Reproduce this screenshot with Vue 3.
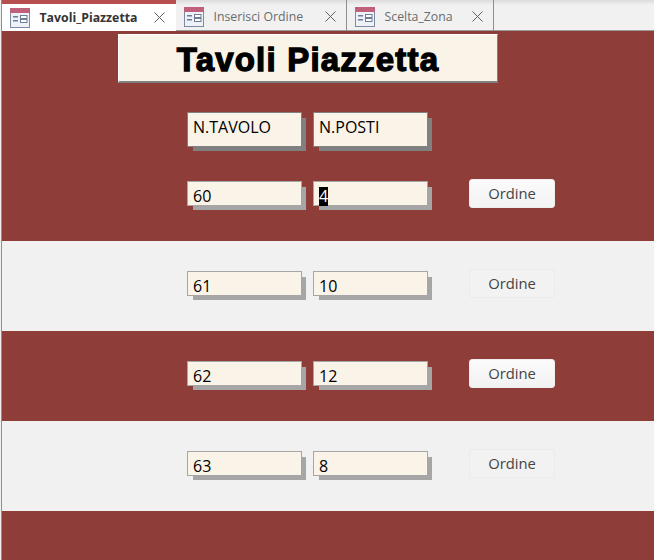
<script setup>
import { ref } from "vue";

const tabs = ref([
  { name: "Tavoli_Piazzetta", width: 174, active: true },
  { name: "Inserisci Ordine", width: 171, active: false },
  { name: "Scelta_Zona", width: 147, active: false },
]);

// primo tavolo sta nella sezione con le intestazioni
const rows = ref([
  { tavolo: "61", posti: "10", light: true },
  { tavolo: "62", posti: "12", light: false },
  { tavolo: "63", posti: "8", light: true },
]);
</script>

<template>
  <div class="window">
    <div class="tabbar">
      <div
        v-for="tab in tabs"
        :key="tab.name"
        class="tab"
        :class="{ active: tab.active }"
        :style="{ width: tab.width + 'px' }"
      >
        <svg class="tabicon" width="20" height="20" viewBox="0 0 20 20">
          <rect x="0.5" y="1.5" width="19" height="18" fill="#eef1f7" stroke="#7d8aa3" />
          <rect x="0" y="0" width="20" height="5" fill="#c0607a" />
          <rect x="3" y="8" width="5" height="1.5" fill="#6d7d99" />
          <rect x="3" y="12" width="5" height="1.5" fill="#6d7d99" />
          <rect x="10.5" y="7.5" width="6.5" height="3" fill="#fff" stroke="#6d7d99" stroke-width="1" />
          <rect x="10.5" y="11.5" width="6.5" height="3" fill="#fff" stroke="#6d7d99" stroke-width="1" />
        </svg>
        <span class="tabname">{{ tab.name }}</span>
        <svg class="tabclose" width="11" height="11" viewBox="0 0 11 11">
          <path d="M0.5 0.5 L10.5 10.5 M10.5 0.5 L0.5 10.5" stroke="#5f5f5f" stroke-width="1" fill="none" />
        </svg>
      </div>
    </div>

    <div class="form">
      <section class="band first">
        <div class="titlebox">Tavoli Piazzetta</div>
        <div class="line heads">
          <div class="field head">N.TAVOLO</div>
          <div class="field head">N.POSTI</div>
        </div>
        <div class="line datarow">
          <div class="field">60</div>
          <div class="field"><span class="selected">4</span></div>
          <button class="ordine">Ordine</button>
        </div>
      </section>

      <section v-for="row in rows" :key="row.tavolo" class="band" :class="{ light: row.light }">
        <div class="line datarow">
          <div class="field">{{ row.tavolo }}</div>
          <div class="field">{{ row.posti }}</div>
          <button class="ordine">Ordine</button>
        </div>
      </section>

      <section class="band last"></section>
    </div>
  </div>
</template>

<style>
html, body {
  margin: 0;
  background: #8f3d39;
}
</style>

<style scoped>
.window {
  width: 654px;
  height: 560px;
  box-sizing: border-box;
  padding-left: 2px;
  overflow: hidden;
  display: flex;
  flex-direction: column;
  background: linear-gradient(90deg, #f1f1f1 1px, #8b9096 1px) 0 0 / 2px 100% no-repeat;
  font-family: "Open Sans", "Noto Sans", sans-serif;
}
.tabbar {
  height: 31px;
  flex: none;
  display: flex;
  box-sizing: border-box;
  border-bottom: 1px solid #9a9a9a;
  background: linear-gradient(#dcdcdc 0, #f1f1f1 5px);
}
.tab {
  box-sizing: border-box;
  display: flex;
  align-items: center;
  height: 30px;
  padding: 3px 0 0 8px;
  border-right: 1px solid #8f8f8f;
  color: #6b6b6b;
  font-size: 12.3px;
}
.tab.active {
  height: 31px;
  background: #fff;
  border-top: 4px solid #b5504f;
  border-right: none;
  color: #333;
  font-weight: 700;
  padding-top: 0;
  padding-right: 1px;
}
.tabicon {
  flex: none;
}
.tabname {
  margin-left: 9.5px;
  flex: 1;
  white-space: nowrap;
}
.tabclose {
  flex: none;
  margin-right: 10px;
}
.form {
  flex: 1;
  display: flex;
  flex-direction: column;
}
.band {
  height: 90px;
  flex: none;
  display: flex;
  flex-direction: column;
  background: #8f3d39;
  box-sizing: border-box;
  padding-left: 185px;
}
.band.light {
  background: #f1f1f1;
}
.band.first {
  height: 210px;
}
.band.last {
  flex: 1;
}
.titlebox {
  box-sizing: border-box;
  width: 380px;
  height: 49px;
  margin: 3px 0 0 -69px;
  background: #faf3e8;
  border: 1px solid #fff;
  border-right-color: #808080;
  border-bottom: 2px solid #808080;
  color: #000;
  font-family: "Liberation Sans", Arial, sans-serif;
  font-size: 33px;
  font-weight: 700;
  -webkit-text-stroke: 1.3px #000;
  letter-spacing: 1.2px;
  line-height: 50px;
  text-align: center;
}
.line {
  display: flex;
  align-items: flex-start;
  gap: 11px;
}
.heads {
  margin-top: 29px;
}
.first .datarow {
  margin-top: 34px;
}
.band:not(.first):not(.last) .datarow {
  margin-top: 30px;
}
.field {
  box-sizing: border-box;
  width: 115px;
  height: 25px;
  padding: 3px 0 0 5px;
  background: #faf3e8;
  border: 1px solid #a6a6a6;
  box-shadow: 5px 5px 0 -1px #a6a6a6;
  color: #000;
  font-size: 16px;
  line-height: 22px;
}
.field.head {
  height: 35px;
  padding-top: 3px;
  border-color: #808080;
  box-shadow: 5px 5px 0 -1px #808080;
}
.selected {
  background: #000;
  color: #fff;
  display: inline-block;
  line-height: 19px;
}
.ordine {
  box-sizing: border-box;
  width: 86px;
  height: 29px;
  margin: -2px 0 0 30px;
  padding: 0 0 2px;
  border: 1px solid #eeeeee;
  border-radius: 3px;
  background: linear-gradient(#fbfbfb, #f2f2f2);
  color: #444;
  font-family: inherit;
  font-size: 14.8px;
}
.light .ordine {
  background: #f2f2f2;
  border-color: #ebebeb;
}
</style>
